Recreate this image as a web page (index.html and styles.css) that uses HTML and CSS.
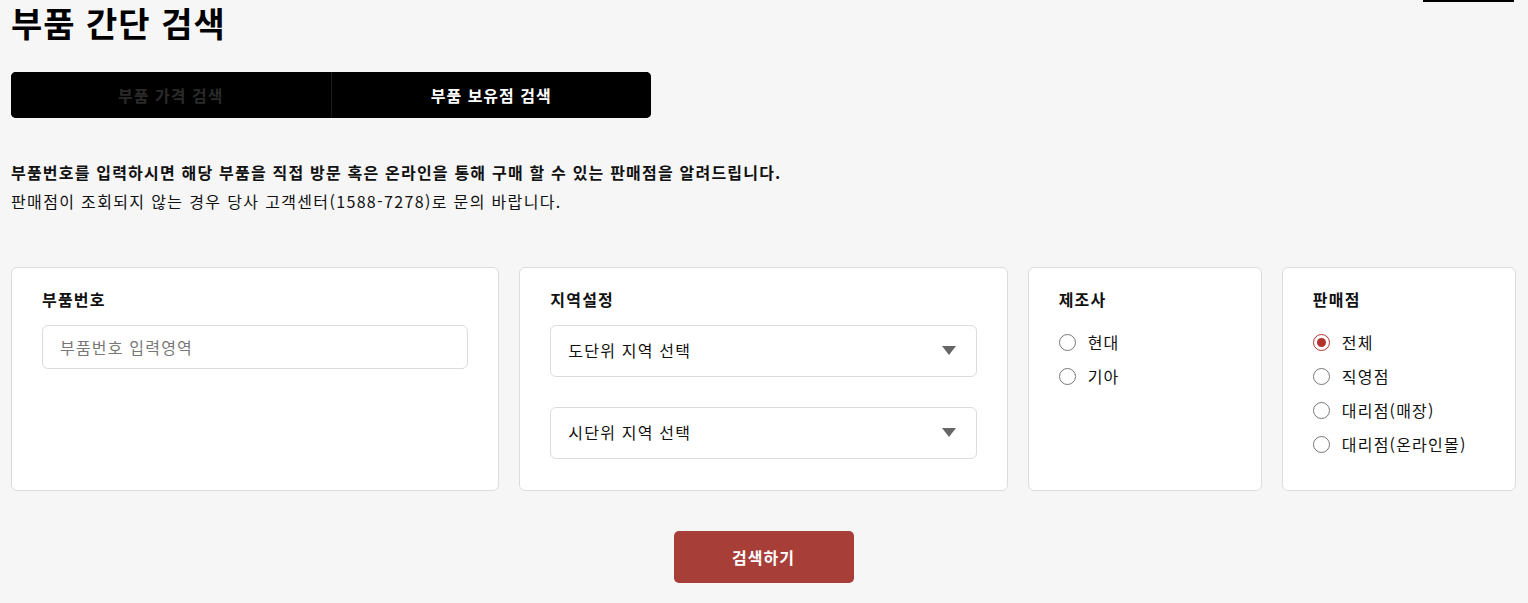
FILE: index.html
```html
<!DOCTYPE html>
<html lang="ko">
<head>
  <meta charset="UTF-8" />
  <title>부품 간단 검색</title>
  <link rel="stylesheet" href="styles.css">
</head>
<body>
  <div class="page">
    <div class="head">
      <h1>부품 간단 검색</h1>
      <div class="head-bar"></div>
    </div>

    <div class="tabs">
      <button class="tab">부품 가격 검색</button>
      <button class="tab active">부품 보유점 검색</button>
    </div>

    <div class="guide">
      <p class="guide-strong">부품번호를 입력하시면 해당 부품을 직접 방문 혹은 온라인을 통해 구매 할 수 있는 판매점을 알려드립니다.</p>
      <p class="guide-sub">판매점이 조회되지 않는 경우 당사 고객센터(1588-7278)로 문의 바랍니다.</p>
    </div>

    <div class="cards">
      <div class="card">
        <div class="card-title">부품번호</div>
        <input type="text" class="field" placeholder="부품번호 입력영역" />
      </div>

      <div class="card">
        <div class="card-title">지역설정</div>
        <div class="select-list">
          <div class="select">
            <span>도단위 지역 선택</span>
            <i class="caret"></i>
          </div>
          <div class="select">
            <span>시단위 지역 선택</span>
            <i class="caret"></i>
          </div>
        </div>
      </div>

      <div class="card">
        <div class="card-title">제조사</div>
        <label class="radio"><i class="dot"></i>현대</label>
        <label class="radio"><i class="dot"></i>기아</label>
      </div>

      <div class="card">
        <div class="card-title">판매점</div>
        <label class="radio"><i class="dot on"></i>전체</label>
        <label class="radio"><i class="dot"></i>직영점</label>
        <label class="radio"><i class="dot"></i>대리점(매장)</label>
        <label class="radio"><i class="dot"></i>대리점(온라인몰)</label>
      </div>
    </div>

    <div class="actions">
      <button class="search-btn">검색하기</button>
    </div>
  </div>
</body>
</html>
```

FILE: styles.css
```css
body {
  margin: 0;
  background-color: #f6f6f6;
  font-family: "Noto Sans CJK KR", "Noto Sans", sans-serif;
  letter-spacing: 1.2px;
  color: #111;
}
.page {
  padding: 0 12px 0 11px;
}
.head {
  display: flex;
  justify-content: space-between;
  align-items: flex-start;
}
.head h1 {
  margin: 0;
  font-size: 34px;
  line-height: 46px;
  font-weight: 700;
  letter-spacing: 1px;
  color: #000;
}
.head-bar {
  width: 91px;
  height: 2px;
  background: #000;
  margin-right: 2px;
}
.tabs {
  display: flex;
  width: 640px;
  height: 46px;
  margin-top: 26px;
  background: #000;
  border-radius: 5px;
  overflow: hidden;
}
.tab {
  flex: 1;
  border: 0;
  background: #000;
  color: #2a2a2a;
  font-family: inherit;
  font-size: 16px;
  font-weight: 700;
  letter-spacing: 1px;
}
.tab + .tab {
  border-left: 1px solid #1c1c1c;
}
.tab.active {
  color: #fff;
}
.guide {
  margin-top: 40px;
}
.guide p {
  margin: 0;
  font-size: 16px;
  line-height: 29px;
}
.guide .guide-strong {
  font-weight: 700;
}
.guide .guide-sub {
  letter-spacing: 1.35px;
}
.cards {
  display: grid;
  grid-template-columns: minmax(0, 488fr) minmax(0, 488fr) minmax(0, 234fr) minmax(0, 234fr);
  gap: 20px;
  margin-top: 51px;
}
.card {
  height: 224px;
  box-sizing: border-box;
  background: #fff;
  border: 1px solid #dcdcdc;
  border-radius: 6px;
  padding: 19px 30px;
}
.card-title {
  font-size: 16px;
  line-height: 24px;
  font-weight: 700;
  margin-bottom: 14px;
}
.field {
  display: block;
  width: 100%;
  height: 44px;
  box-sizing: border-box;
  border: 1px solid #dcdcdc;
  border-radius: 6px;
  padding: 0 17px;
  font-family: inherit;
  font-size: 16px;
  letter-spacing: 1.2px;
  color: #111;
}
.field::placeholder {
  color: #777;
}
.select-list {
  display: flex;
  flex-direction: column;
  gap: 30px;
}
.select {
  display: flex;
  align-items: center;
  justify-content: space-between;
  height: 52px;
  box-sizing: border-box;
  border: 1px solid #dcdcdc;
  border-radius: 6px;
  padding: 0 20px 3px 17px;
  font-size: 16px;
}
.caret {
  width: 0;
  height: 0;
  margin-top: 1px;
  border-left: 7px solid transparent;
  border-right: 7px solid transparent;
  border-top: 9px solid #666;
}
.radio {
  display: flex;
  align-items: center;
  gap: 12px;
  height: 34px;
  font-size: 16px;
}
.card-title + .radio {
  margin-top: 14px;
}
.dot {
  width: 17px;
  height: 17px;
  box-sizing: border-box;
  border: 1px solid #777;
  border-radius: 50%;
  display: flex;
  align-items: center;
  justify-content: center;
}
.dot.on {
  border-color: #b3332e;
}
.dot.on::after {
  content: "";
  width: 9px;
  height: 9px;
  border-radius: 50%;
  background: #b3332e;
}
.actions {
  display: flex;
  justify-content: center;
  margin-top: 40px;
}
.search-btn {
  width: 180px;
  height: 52px;
  border: 0;
  border-radius: 5px;
  background: #a83e38;
  color: #fff;
  font-family: inherit;
  font-size: 16px;
  font-weight: 700;
  letter-spacing: 1px;
}
```
